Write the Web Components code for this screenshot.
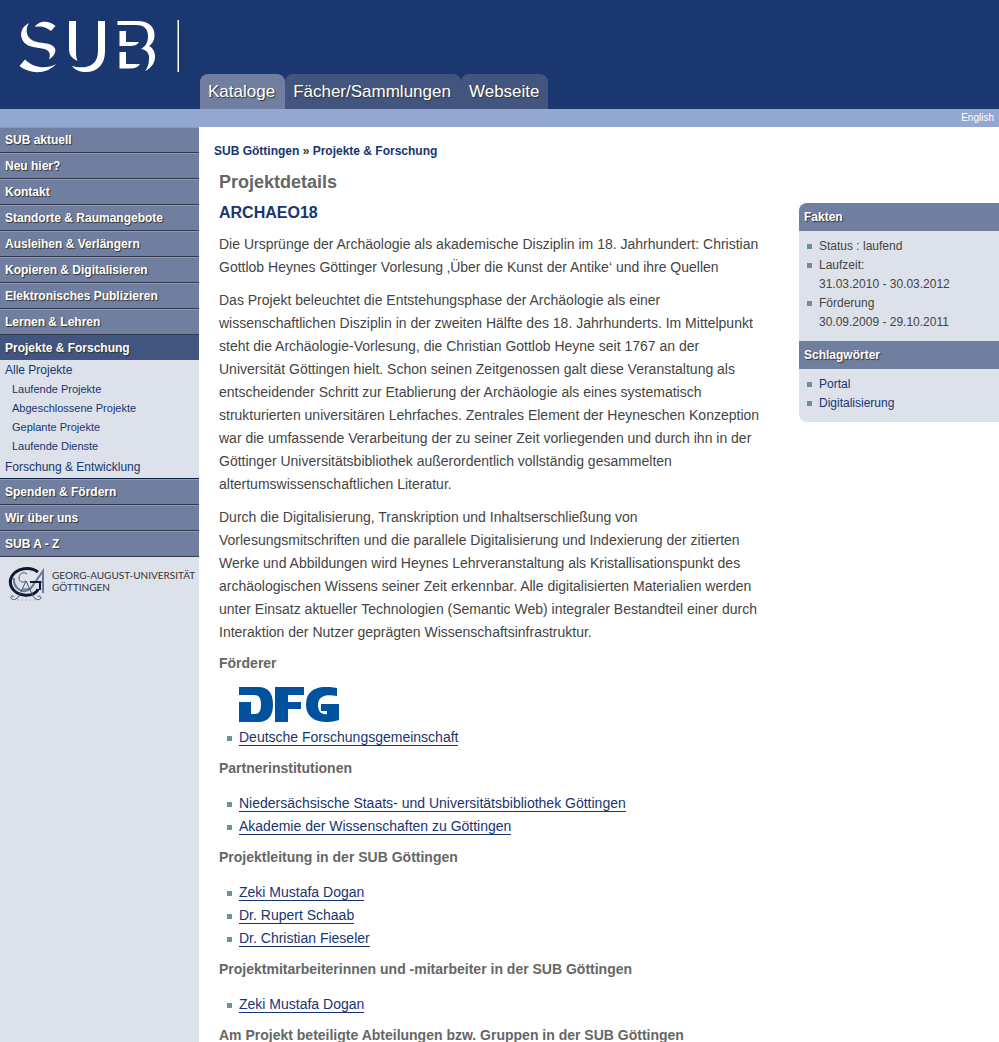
<!DOCTYPE html>
<html lang="de">
<head>
<meta charset="utf-8">
<title>SUB Göttingen – Projektdetails</title>
<style>
html { scrollbar-width: none; }
body { margin: 0; background: #fff; color: #444; font-family: "Liberation Sans", Arial, sans-serif; font-size: 14px; line-height: 23px; }
</style>
</head>
<body>
<sub-page>
  <sub-header slot="header">
    <sub-tab active>Kataloge</sub-tab>
    <sub-tab>Fächer/Sammlungen</sub-tab>
    <sub-tab>Webseite</sub-tab>
  </sub-header>

  <sub-sidebar slot="sidebar">
    <nav-item>SUB aktuell</nav-item>
    <nav-item>Neu hier?</nav-item>
    <nav-item>Kontakt</nav-item>
    <nav-item>Standorte &amp; Raumangebote</nav-item>
    <nav-item>Ausleihen &amp; Verlängern</nav-item>
    <nav-item>Kopieren &amp; Digitalisieren</nav-item>
    <nav-item>Elektronisches Publizieren</nav-item>
    <nav-item>Lernen &amp; Lehren</nav-item>
    <nav-item active>Projekte &amp; Forschung
      <nav-subitem slot="children">Alle Projekte</nav-subitem>
      <nav-subitem slot="children" deep>Laufende Projekte</nav-subitem>
      <nav-subitem slot="children" deep>Abgeschlossene Projekte</nav-subitem>
      <nav-subitem slot="children" deep>Geplante Projekte</nav-subitem>
      <nav-subitem slot="children" deep>Laufende Dienste</nav-subitem>
      <nav-subitem slot="children">Forschung &amp; Entwicklung</nav-subitem>
    </nav-item>
    <nav-item>Spenden &amp; Fördern</nav-item>
    <nav-item>Wir über uns</nav-item>
    <nav-item>SUB A - Z</nav-item>
    <university-logo slot="footer"></university-logo>
  </sub-sidebar>

  <project-article></project-article>

  <fact-box slot="aside">
    <fact-section heading="Fakten">
      <fact-item>Status : laufend</fact-item>
      <fact-item>Laufzeit:<br>31.03.2010 - 30.03.2012</fact-item>
      <fact-item>Förderung<br>30.09.2009 - 29.10.2011</fact-item>
    </fact-section>
    <fact-section heading="Schlagwörter">
      <fact-item link>Portal</fact-item>
      <fact-item link>Digitalisierung</fact-item>
    </fact-section>
  </fact-box>
</sub-page>

<script>
function define(name, html, setup) {
  const template = document.createElement('template');
  template.innerHTML = html;
  customElements.define(name, class extends HTMLElement {
    constructor() {
      super();
      this.attachShadow({ mode: 'open' }).append(template.content.cloneNode(true));
    }
    connectedCallback() {
      if (setup) setup(this, this.shadowRoot);
    }
  });
}

define('sub-page', `
<style>
:host { display: flex; flex-direction: column; min-height: 100vh; }
.columns { flex: 1; display: grid; grid-template-columns: 199px minmax(0, 1fr); }
main { display: grid; grid-template-columns: minmax(0, 1fr) 200px; grid-template-rows: auto 1fr; }
.crumbs { grid-column: 1 / -1; margin: 12px 0 0 15px; font-size: 12px; font-weight: bold; line-height: 24px; color: #333; }
.crumbs a { color: #17356f; text-decoration: none; }
.article { padding: 7px 34px 0 20px; }
.aside { padding-top: 40px; }
</style>
<slot name="header"></slot>
<div class="columns">
  <slot name="sidebar"></slot>
  <main>
    <nav class="crumbs" aria-label="Pfad"><a href="#">SUB Göttingen</a> » <a href="#">Projekte &amp; Forschung</a></nav>
    <div class="article"><slot></slot></div>
    <div class="aside"><slot name="aside"></slot></div>
  </main>
</div>`);

define('sub-header', `
<style>
:host { display: block; background: #1a376f; }
.banner { display: flex; align-items: flex-end; height: 109px; }
.logo { width: 200px; height: 109px; flex: none; }
svg { display: block; }
nav { display: flex; }
.strip { display: flex; justify-content: flex-end; height: 18px; padding-right: 5px; background: #94a7d0; }
.strip a { color: #fff; font-size: 10px; line-height: 18px; text-decoration: none; }
</style>
<header>
  <div class="banner">
    <a class="logo" href="#" aria-label="SUB">
      <svg width="200" height="109" viewBox="0 0 200 109" fill="#fff" aria-hidden="true">
        <path d="M29 23C21 27 20 34 22 39C24 45 31 47 39 48C47 49 52 51 49 59.500C55 56 57 50 54 47C51 43 43 43.500 37 42C27 40 24 31 29 23Z"/>
        <path d="M35 27C38 21 48 19.500 55.500 26L51 31C47 27.500 41 25.500 35 27Z"/>
        <path d="M25 59.500L19.500 66C30 74.500 47 74.500 56 64C47 69 35 69 25 59.500Z"/>
        <path d="M69 21H76V48C76 54 76 58 77.500 61C71 58 69 54 69 49Z"/>
        <path d="M98 21H105V51C105 65 97 72 86 72C80 72 75 70 72 66C83 69 98 68 98 51Z"/>
        <path d="M117.500 21H137C149 21 154.500 27 154.500 35C154.500 41 152 44 149 46C153 48 155 52 155 57C155 63 151 68.500 145 71C149 66 149 61 149 57C149 52 145 49.500 141 49C146 46 148 42 148 36C148 28 143 25 136 25H117.500Z"/>
        <path d="M119.500 31H126V42H139C137 45 134 46 130 46H119.500ZM119.500 52H126V64H140C138 67 135 68.500 130 68.500H119.500Z"/>
        <path d="M177.500 20H179V72H177.500Z"/>
      </svg>
    </a>
    <nav aria-label="Suche"><slot></slot></nav>
  </div>
  <div class="strip"><a href="#">English</a></div>
</header>`);

define('sub-tab', `
<style>
:host { display: block; background: #41557f; border-radius: 8px 8px 0 0; }
:host([active]) { background: #707f9f; }
a { display: block; padding: 0 10px 0 8px; color: #fff; font-size: 17px; line-height: 35px; text-decoration: none; text-shadow: 1px 1px 1px #333; }
:host(:last-child) a { padding-right: 8px; }
</style>
<a href="#"><slot></slot></a>`);

define('sub-sidebar', `
<style>
:host { display: block; background: #dde1e9; }
</style>
<nav aria-label="Hauptmenü"><slot></slot></nav>
<slot name="footer"></slot>`);

define('nav-item', `
<style>
:host { display: block; border-bottom: 1px solid #34394d; }
:host([active]) { border-bottom-color: #0c1f45; }
.row { display: block; padding-left: 5px; border-top: 1px solid #8d9abb; background: #707f9f; color: #fff; font-size: 12px; font-weight: bold; line-height: 24px; text-decoration: none; text-shadow: 1px 1px 1px #333; }
:host([active]) .row { background: #41557f; border-top-color: #41557f; }
:host([active]) .children { padding-bottom: 1px; }
</style>
<a class="row" href="#"><slot></slot></a>
<div class="children"><slot name="children"></slot></div>`);

define('nav-subitem', `
<style>
:host { display: block; }
:host(:last-child) { padding-top: 1px; }
a { display: block; padding-left: 5px; color: #17356f; font-size: 12px; line-height: 20px; text-decoration: none; }
:host([deep]) a { padding-left: 12px; font-size: 11px; line-height: 19px; }
</style>
<a href="#"><slot></slot></a>`);

define('university-logo', `
<style>
:host { display: block; padding: 7px 0 0 8px; }
a { display: flex; gap: 4px; color: #333; text-decoration: none; }
span { padding-top: 5px; font: 10px/12px Lato, "Liberation Sans", sans-serif; white-space: nowrap; }
</style>
<a href="#">
  <svg width="40" height="38" viewBox="8 563 40 38" fill="none" aria-hidden="true">
    <path d="M14 577C13 588 24 594 31 587L43 570V592M31 581H43" stroke="#6a7894" stroke-width="2"/>
    <path d="M38 571C30 565 17 567 12 575C7 584 14 593 24 594C31 595 37 592 38 588" stroke="#0d1a33" stroke-width="3"/>
    <path d="M30 581H40V589" stroke="#0d1a33" stroke-width="2"/>
    <path d="M27 573C23 570 19 573 19 577C19 581 23 582 26 580M26 580L20 593C18 599 12 600 11 597C10 595 13 594 14 596M26 580L32 593C34 599 40 600 41 597C41 595 38 594 38 596M22 588H30" stroke="#4b5364"/>
    <path d="M18 599H35" stroke="#9299a7" stroke-dasharray="1 3"/>
  </svg>
  <span>GEORG-AUGUST-UNIVERSITÄT<br>GÖTTINGEN</span>
</a>`);

define('project-article', `
<style>
:host { display: block; }
h1, h2, p { margin: 0; }
h1 { color: #666; font-size: 18px; line-height: 24px; }
h2 { margin: 7px 0 8px; color: #17356f; font-size: 16px; line-height: 24px; }
p { margin-bottom: 10px; }
p:last-of-type { margin-bottom: 0; }
</style>
<article>
  <h1>Projektdetails</h1>
  <h2>ARCHAEO18</h2>
  <p>Die Ursprünge der Archäologie als akademische Disziplin im 18. Jahrhundert: Christian Gottlob Heynes Göttinger Vorlesung ‚Über die Kunst der Antike‘ und ihre Quellen</p>
  <p>Das Projekt beleuchtet die Entstehungsphase der Archäologie als einer wissenschaftlichen Disziplin in der zweiten Hälfte des 18. Jahrhunderts. Im Mittelpunkt steht die Archäologie-Vorlesung, die Christian Gottlob Heyne seit 1767 an der Universität Göttingen hielt. Schon seinen Zeitgenossen galt diese Veranstaltung als entscheidender Schritt zur Etablierung der Archäologie als eines systematisch strukturierten universitären Lehrfaches. Zentrales Element der Heyneschen Konzeption war die umfassende Verarbeitung der zu seiner Zeit vorliegenden und durch ihn in der Göttinger Universitätsbibliothek außerordentlich vollständig gesammelten altertumswissenschaftlichen Literatur.</p>
  <p>Durch die Digitalisierung, Transkription und Inhaltserschließung von Vorlesungsmitschriften und die parallele Digitalisierung und Indexierung der zitierten Werke und Abbildungen wird Heynes Lehrveranstaltung als Kristallisationspunkt des archäologischen Wissens seiner Zeit erkennbar. Alle digitalisierten Materialien werden unter Einsatz aktueller Technologien (Semantic Web) integraler Bestandteil einer durch Interaktion der Nutzer geprägten Wissenschaftsinfrastruktur.</p>
  <link-section heading="Förderer">
    <dfg-logo></dfg-logo>
    <link-item>Deutsche Forschungsgemeinschaft</link-item>
  </link-section>
  <link-section heading="Partnerinstitutionen">
    <link-item>Niedersächsische Staats- und Universitätsbibliothek Göttingen</link-item>
    <link-item>Akademie der Wissenschaften zu Göttingen</link-item>
  </link-section>
  <link-section heading="Projektleitung in der SUB Göttingen">
    <link-item>Zeki Mustafa Dogan</link-item>
    <link-item>Dr. Rupert Schaab</link-item>
    <link-item>Dr. Christian Fieseler</link-item>
  </link-section>
  <link-section heading="Projektmitarbeiterinnen und -mitarbeiter in der SUB Göttingen">
    <link-item>Zeki Mustafa Dogan</link-item>
  </link-section>
  <link-section heading="Am Projekt beteiligte Abteilungen bzw. Gruppen in der SUB Göttingen"></link-section>
</article>`);

define('link-section', `
<style>
:host { display: block; padding-top: 8px; }
h3 { margin: 0 0 12px; color: #666; font-size: 14px; line-height: 23px; }
div { padding-left: 20px; }
</style>
<h3></h3>
<div role="list"><slot></slot></div>`, (host, root) => {
  root.querySelector('h3').textContent = host.getAttribute('heading');
});

define('link-item', `
<style>
:host { display: block; }
div { display: flex; align-items: center; margin-left: -12px; gap: 7px; }
div::before { content: ""; width: 5px; height: 5px; margin-top: 1px; background: #68919f; }
a { color: #17356f; border-bottom: 1px solid #17356f; text-decoration: none; }
</style>
<div role="listitem"><span><a href="#"><slot></slot></a></span></div>`);

define('dfg-logo', `
<style>
:host { display: block; padding-bottom: 4px; }
svg { display: block; }
</style>
<svg width="100" height="35" viewBox="0 0 100 35" fill="#00519e" role="img" aria-label="DFG">
  <path d="M0 0H19C30 0 34 7 34 17.500C34 28 30 35 19 35H0V15H12V27H16C20 27 22 24 22 17.500C22 11 20 8 15 8H0Z"/>
  <path d="M36 0H65V8H49V15H62V22H49V35H36Z"/>
  <path d="M98 1V9C88 7 79 8 79 18C79 25 83 28 88 27V24H82V17H100V33C84 38 67 34 67 18C67 0 83-2 98 1Z"/>
</svg>`);

define('fact-box', `
<style>
:host { display: block; overflow: hidden; border-radius: 8px 0 0 8px; background: #dde1e9; }
</style>
<aside><slot></slot></aside>`);

define('fact-section', `
<style>
:host { display: block; }
h2 { margin: 0; padding-left: 5px; background: #707f9f; color: #fff; font-size: 12px; line-height: 28px; text-shadow: 1px 1px 1px #333; }
div { padding: 6px 0 9px 8px; }
</style>
<h2></h2>
<div role="list"><slot></slot></div>`, (host, root) => {
  root.querySelector('h2').textContent = host.getAttribute('heading');
});

define('fact-item', `
<style>
:host { display: block; font-size: 12px; line-height: 19px; }
div { display: flex; gap: 7px; }
div::before { content: ""; width: 5px; height: 5px; margin-top: 7px; background: #68919f; }
a { color: #17356f; text-decoration: none; }
</style>
<div role="listitem"></div>`, (host, root) => {
  const text = document.createElement(host.hasAttribute('link') ? 'a' : 'span');
  if (host.hasAttribute('link')) text.href = '#';
  text.append(document.createElement('slot'));
  root.querySelector('div').replaceChildren(text);
});
</script>
</body>
</html>
